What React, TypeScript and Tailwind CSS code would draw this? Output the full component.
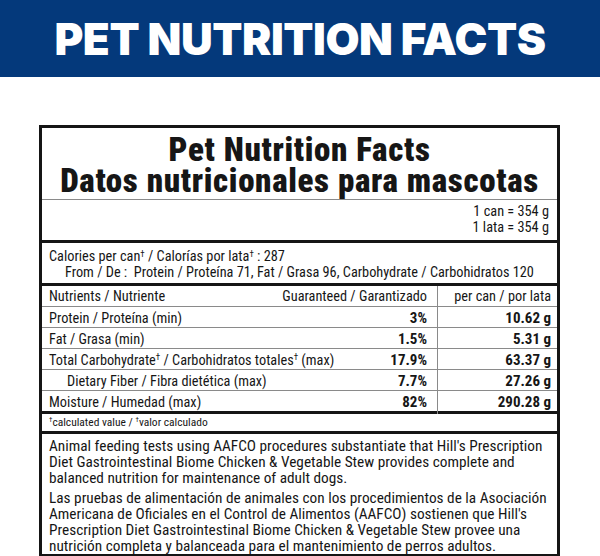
const cond = "font-['Roboto_Condensed','Roboto',sans-serif]";

const rows = [
  { label: "Protein / Proteína (min)", pct: "3%", amt: "10.62 g", indent: false },
  { label: "Fat / Grasa (min)", pct: "1.5%", amt: "5.31 g", indent: false },
  {
    label: (
      <>
        Total Carbohydrate<sup className="text-[9px]">†</sup> / Carbohidratos totales<sup className="text-[9px]">†</sup> (max)
      </>
    ),
    pct: "17.9%",
    amt: "63.37 g",
    indent: false,
  },
  { label: "Dietary Fiber / Fibra dietética (max)", pct: "7.7%", amt: "27.26 g", indent: true },
  { label: "Moisture / Humedad (max)", pct: "82%", amt: "290.28 g", indent: false },
];

export default function App() {
  return (
    <div className="w-[600px] h-[556px] bg-white overflow-hidden">
      <div className="h-[77px] bg-[#04397b] flex items-center justify-center">
        <h1 className="font-['Inter',sans-serif] font-black text-[44px] leading-none text-white tracking-[-0.01em]">
          PET NUTRITION FACTS
        </h1>
      </div>

      <div className={`${cond} mt-[48px] ml-[39px] w-[521px] border-[3px] border-[#151515] text-[#161616]`}>
        <div className="pt-[6px] pb-[3px] text-center font-black text-[33px] leading-[31px] tracking-[0.02em]">
          <div>Pet Nutrition Facts</div>
          <div>Datos nutricionales para mascotas</div>
        </div>

        <div className="border-t border-[#8a8a8a] pt-[3px] pb-[5px] pr-[8px] text-right text-[14.3px] leading-[16px]">
          <div>1 can = 354 g</div>
          <div>1 lata = 354 g</div>
        </div>

        <div className="border-t-[3px] border-[#151515] pt-[5px] pb-[3px] pl-[7px] text-[14.3px] leading-[16px] whitespace-nowrap">
          <div>
            Calories per can<sup className="text-[9px]">†</sup> / Calorías por lata<sup className="text-[9px]">†</sup> : 287
          </div>
          <div className="pl-[16px]">
            From / De :&nbsp; Protein / Proteína 71, Fat / Grasa 96, Carbohydrate / Carbohidratos 120
          </div>
        </div>

        <div className="border-t-[3px] border-[#151515] text-[14.3px]">
          <div className="grid grid-cols-[1fr_119px] h-[20px] items-center">
            <div className="flex justify-between pl-[7px] pr-[10px] border-r border-[#8a8a8a] h-full items-center">
              <span>Nutrients / Nutriente</span>
              <span>Guaranteed / Garantizado</span>
            </div>
            <div className="text-right pr-[6px]">per can / por lata</div>
          </div>
          {rows.map((r, i) => (
            <div key={i} className="grid grid-cols-[1fr_119px] h-[21px] border-t border-[#8a8a8a] items-center">
              <div className="flex justify-between pl-[7px] pr-[10px] border-r border-[#8a8a8a] h-full items-center">
                <span className={r.indent ? "pl-[18px]" : ""}>{r.label}</span>
                <span className="font-bold text-[15px]">{r.pct}</span>
              </div>
              <div className="text-right pr-[6px] font-bold text-[15px]">{r.amt}</div>
            </div>
          ))}
        </div>

        <div className="border-t-[3px] border-[#151515] h-[20px] flex items-center pl-[7px] text-[11.5px]">
          <span>
            <sup className="text-[7px]">†</sup>calculated value / <sup className="text-[7px]">†</sup>valor calculado
          </span>
        </div>

        <div className="border-t-[3px] border-[#151515] pt-[4px] pb-0 pl-[7px] text-[15.3px] leading-[16px] whitespace-nowrap">
          <div className="mb-[4px]">
            <div>Animal feeding tests using AAFCO procedures substantiate that Hill's Prescription</div>
            <div>Diet Gastrointestinal Biome Chicken &amp; Vegetable Stew provides complete and</div>
            <div>balanced nutrition for maintenance of adult dogs.</div>
          </div>
          <div>
            <div>Las pruebas de alimentación de animales con los procedimientos de la Asociación</div>
            <div>Americana de Oficiales en el Control de Alimentos (AAFCO) sostienen que Hill's</div>
            <div>Prescription Diet Gastrointestinal Biome Chicken &amp; Vegetable Stew provee una</div>
            <div>nutrición completa y balanceada para el mantenimiento de perros adultos.</div>
          </div>
        </div>
      </div>
    </div>
  );
}
